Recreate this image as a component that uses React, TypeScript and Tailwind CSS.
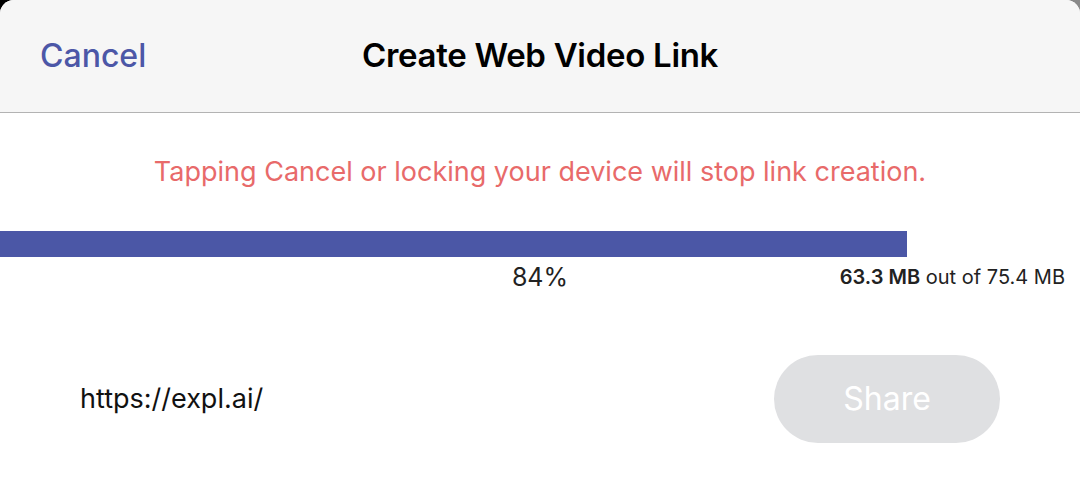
const font = { fontFamily: "Inter, 'Liberation Sans', sans-serif" };

export default function App() {
  const done = 63.3;
  const total = 75.4;
  const pct = Math.round((done / total) * 100);

  return (
    <div className="w-[1080px] h-[478px] bg-gradient-to-r from-black to-[#8a8a8a] overflow-hidden" style={font}>
      <div className="h-full bg-white rounded-t-[14px] overflow-hidden flex flex-col">
        <header className="h-[113px] shrink-0 bg-[#f6f6f6] border-b border-[#b3b3b3] relative flex items-center justify-center pb-[3px]">
          <button className="absolute left-[40px] top-[34px] text-[32px] leading-[44px] font-medium text-[#4c57a7]">
            Cancel
          </button>
          <h1 className="text-[33px] leading-[44px] font-semibold text-black tracking-[-0.3px]">Create Web Video Link</h1>
        </header>

        <p className="mt-[42px] text-center text-[27px] leading-[34px] text-[#e86a6a]">
          Tapping Cancel or locking your device will stop link creation.
        </p>

        <div className="mt-[42px] h-[26px] w-full">
          <div className="h-full bg-[#4b57a6]" style={{ width: `${pct}%` }} />
        </div>

        <div className="relative h-[42px]">
          <div className="text-center text-[25px] text-[#222] leading-[40px]">{pct}%</div>
          <div className="absolute right-[15px] top-[8px] text-[20px] leading-[24px] text-[#222]">
            <span className="font-semibold">{done} MB</span> out of {total} MB
          </div>
        </div>

        <div className="mt-[56px] flex items-center pl-[80px] pr-[80px]">
          <span className="text-[27px] text-[#111] flex-1">https://expl.ai/</span>
          <button className="w-[226px] h-[88px] rounded-full bg-[#dfe0e2] text-white text-[32px]">Share</button>
        </div>
      </div>
    </div>
  );
}
